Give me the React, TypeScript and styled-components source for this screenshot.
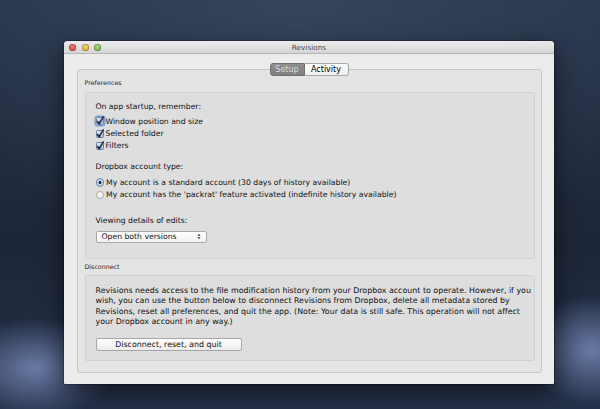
import styled, { createGlobalStyle } from "styled-components";

const GlobalStyle = createGlobalStyle`
  html, body {
    margin: 0;
    padding: 0;
    width: 600px;
    height: 409px;
    overflow: hidden;
  }
  body {
    font-family: "DejaVu Sans", "Liberation Sans", sans-serif;
    background:
      radial-gradient(ellipse 80px 50px at 36px 368px, rgba(125, 142, 190, 0.8), rgba(125, 142, 190, 0) 100%),
      radial-gradient(ellipse 65px 55px at 592px 350px, rgba(125, 142, 190, 0.8), rgba(125, 142, 190, 0) 100%),
      radial-gradient(ellipse 420px 260px at 300px 0px, #36455c, rgba(40, 52, 72, 0) 100%),
      linear-gradient(180deg, #28344a 0%, #1d2638 60%, #25314a 100%);
  }
`;

const Desk = styled.div`
  width: 600px;
  height: 409px;
  padding: 41px 0 0 64px;
  box-sizing: border-box;
`;

const Window = styled.div`
  width: 490px;
  height: 343px;
  display: flex;
  flex-direction: column;
  background: #ececec;
  border-radius: 4px 4px 1px 1px;
  box-shadow: 0 8px 24px rgba(0, 0, 0, 0.55), 0 0 0 1px rgba(0, 0, 0, 0.25);
  overflow: hidden;
`;

const TitleBar = styled.div`
  height: 13px;
  flex: none;
  display: flex;
  align-items: center;
  position: relative;
  background: linear-gradient(180deg, #ececec 0%, #d6d6d6 100%);
  border-bottom: 1px solid #b4b4b4;
  box-sizing: border-box;
`;

const Lights = styled.div`
  display: flex;
  gap: 5.5px;
  padding-left: 5px;
`;

const Light = styled.span<{ $c1: string; $c2: string }>`
  width: 7px;
  height: 7px;
  border-radius: 50%;
  background: radial-gradient(circle at 50% 35%, ${(p) => p.$c1}, ${(p) => p.$c2});
  box-shadow: inset 0 0 0 0.5px rgba(0, 0, 0, 0.35);
`;

const Title = styled.div`
  position: absolute;
  left: 0;
  right: 0;
  text-align: center;
  font-size: 7.3px;
  color: #4a4a4a;
  line-height: 13px;
`;

const Body = styled.div`
  flex: 1;
  padding: 9px 12.5px 11px;
  display: flex;
  flex-direction: column;
`;

const Tabs = styled.div`
  display: flex;
  justify-content: center;
  position: relative;
  z-index: 1;
  height: 13px;
`;

const Tab = styled.div<{ $active?: boolean }>`
  height: 13px;
  box-sizing: border-box;
  display: flex;
  align-items: center;
  justify-content: center;
  font-size: 8px;
  color: ${(p) => (p.$active ? "#dcdcdc" : "#000")};
  background: ${(p) =>
    p.$active
      ? "linear-gradient(180deg, #8e8e8e, #7e7e7e)"
      : "linear-gradient(180deg, #ffffff, #eeeeee)"};
  border: 1px solid ${(p) => (p.$active ? "#707070" : "#a8a8a8")};
  border-radius: ${(p) => (p.$active ? "3px 0 0 3px" : "0 3px 3px 0")};
  width: ${(p) => (p.$active ? 35 : 44)}px;
  ${(p) => (p.$active ? "" : "border-left: none;")}
`;

const TabBox = styled.div`
  flex: 1;
  margin-top: -7px;
  background: #e4e4e4;
  border: 1px solid #c6c6c6;
  border-radius: 3px;
  padding: 9px 6px 0 7px;
  display: flex;
  flex-direction: column;
`;

const SectionLabel = styled.div<{ $mt?: number }>`
  font-size: 6.3px;
  line-height: 8px;
  color: #222;
  margin-top: ${(p) => p.$mt ?? 0}px;
  margin-bottom: ${(p) => (p.$mt ? 4 : 5)}px;
`;

const Group = styled.div<{ $height: number }>`
  height: ${(p) => p.$height}px;
  box-sizing: border-box;
  background: #dedede;
  border: 1px solid #d0d0d0;
  border-radius: 2px;
  padding: 9px 10px 0;
  display: flex;
  flex-direction: column;
`;

const Text = styled.div<{ $mt?: number }>`
  font-size: 7.7px;
  line-height: 10px;
  color: #111;
  margin-top: ${(p) => p.$mt ?? 0}px;
`;

const Para = styled.div`
  font-size: 7.9px;
  line-height: 10.4px;
  color: #111;
  margin-top: 1px;
  white-space: nowrap;
`;

const Option = styled.div<{ $mt?: number }>`
  display: flex;
  align-items: center;
  height: 12.4px;
  font-size: 7.7px;
  color: #111;
  margin-top: ${(p) => p.$mt ?? 0}px;
`;

const Check = styled.span<{ $focus?: boolean }>`
  width: 8px;
  height: 8px;
  box-sizing: border-box;
  margin-right: 2px;
  border-radius: 1.5px;
  border: 1px solid #6b7f9c;
  background: linear-gradient(180deg, #dbe8f8, #9db8dc);
  display: flex;
  align-items: center;
  justify-content: center;
  box-shadow: ${(p) => (p.$focus ? "0 0 0 1.5px rgba(90, 140, 210, 0.75)" : "none")};
`;

const Radio = styled.span<{ $on?: boolean }>`
  width: 8.5px;
  height: 8.5px;
  box-sizing: border-box;
  margin-right: 2px;
  border-radius: 50%;
  border: 1px solid ${(p) => (p.$on ? "#7189aa" : "#a9a9a9")};
  background: ${(p) =>
    p.$on
      ? "radial-gradient(circle, #1c2a40 0 1.4px, #c9daf0 1.6px, #a7c0e2 100%)"
      : "linear-gradient(180deg, #ffffff, #ececec)"};
`;

const Popup = styled.div`
  width: 111px;
  height: 12px;
  box-sizing: border-box;
  margin-top: 5px;
  padding: 0 5px;
  display: flex;
  align-items: center;
  justify-content: space-between;
  font-size: 7.7px;
  color: #111;
  background: linear-gradient(180deg, #ffffff, #f1f1f1);
  border: 1px solid #aaaaaa;
  border-radius: 2px;
`;

const Button = styled.div`
  width: 146px;
  height: 13px;
  box-sizing: border-box;
  margin-top: 10px;
  display: flex;
  align-items: center;
  justify-content: center;
  font-size: 7.9px;
  color: #111;
  background: linear-gradient(180deg, #ffffff, #ececec);
  border: 1px solid #a6a6a6;
  border-radius: 2px;
`;

const Tick = () => (
  <svg width="8" height="8" viewBox="0 0 8 8" style={{ overflow: "visible" }}>
    <path d="M1.2 4.2 L3.2 6.6 L7.6 -0.6" stroke="#1b2336" strokeWidth="1.5" fill="none" />
  </svg>
);

const Arrows = () => (
  <svg width="4" height="7" viewBox="0 0 4 7">
    <path d="M0.5 2.8 L2 0.8 L3.5 2.8 Z M0.5 4.2 L2 6.2 L3.5 4.2 Z" fill="#333" />
  </svg>
);

const App = () => {
  const remember = ["Window position and size", "Selected folder", "Filters"];
  return (
    <>
      <GlobalStyle />
      <Desk>
        <Window>
          <TitleBar>
            <Lights>
              <Light $c1="#f07a70" $c2="#c23a33" />
              <Light $c1="#f6d37a" $c2="#d49a24" />
              <Light $c1="#a9dc84" $c2="#5f9e3a" />
            </Lights>
            <Title>Revisions</Title>
          </TitleBar>
          <Body>
            <Tabs>
              <Tab $active>Setup</Tab>
              <Tab>Activity</Tab>
            </Tabs>
            <TabBox>
              <SectionLabel>Preferences</SectionLabel>
              <Group $height={167}>
                <Text>On app startup, remember:</Text>
                {remember.map((label, idx) => (
                  <Option key={label} $mt={idx === 0 ? 3 : 0}>
                    <Check $focus={idx === 0}>
                      <Tick />
                    </Check>
                    {label}
                  </Option>
                ))}
                <Text $mt={10}>Dropbox account type:</Text>
                <Option $mt={4}>
                  <Radio $on />
                  My account is a standard account (30 days of history available)
                </Option>
                <Option>
                  <Radio />
                  My account has the 'packrat' feature activated (indefinite history available)
                </Option>
                <Text $mt={15}>Viewing details of edits:</Text>
                <Popup>
                  Open both versions
                  <Arrows />
                </Popup>
              </Group>
              <SectionLabel $mt={4}>Disconnect</SectionLabel>
              <Group $height={86}>
                <Para>
                  Revisions needs access to the file modification history from your Dropbox account to operate. However, if you
                  <br />
                  wish, you can use the button below to disconnect Revisions from Dropbox, delete all metadata stored by
                  <br />
                  Revisions, reset all preferences, and quit the app. (Note: Your data is still safe. This operation will not affect
                  <br />
                  your Dropbox account in any way.)
                </Para>
                <Button>Disconnect, reset, and quit</Button>
              </Group>
            </TabBox>
          </Body>
        </Window>
      </Desk>
    </>
  );
};

export default App;
